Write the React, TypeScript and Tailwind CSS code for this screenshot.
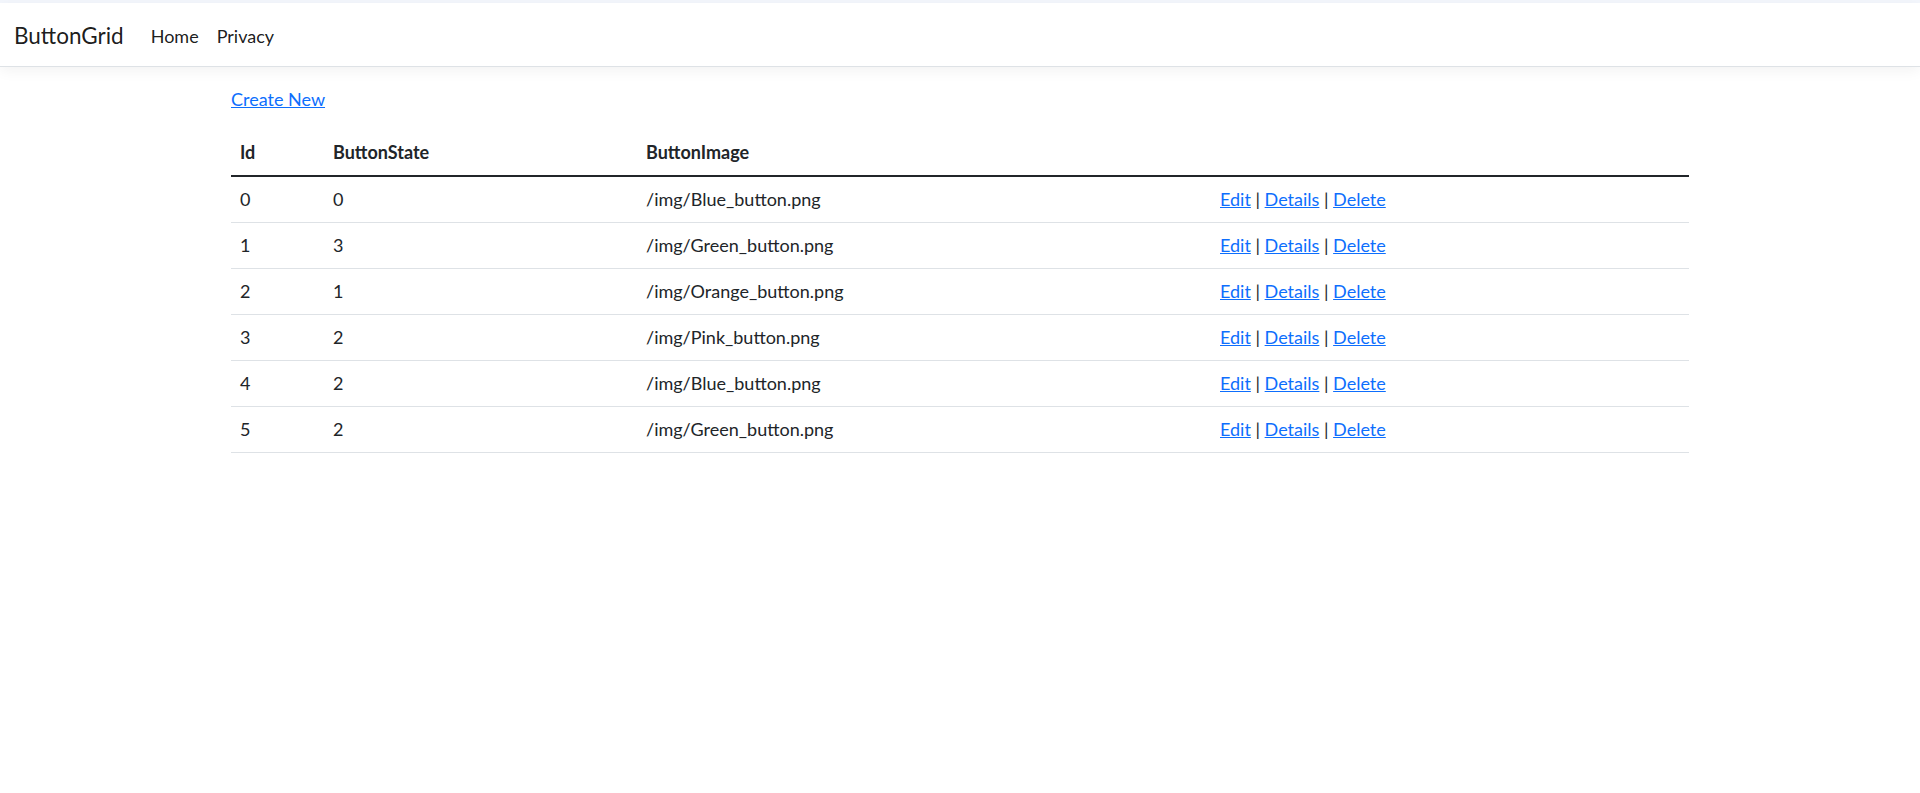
const rows = [
  { id: 0, state: 0, image: "/img/Blue_button.png" },
  { id: 1, state: 3, image: "/img/Green_button.png" },
  { id: 2, state: 1, image: "/img/Orange_button.png" },
  { id: 3, state: 2, image: "/img/Pink_button.png" },
  { id: 4, state: 2, image: "/img/Blue_button.png" },
  { id: 5, state: 2, image: "/img/Green_button.png" },
];

export default function App() {
  return (
    <div className="min-h-[793px] bg-white font-['Lato','Liberation_Sans',sans-serif] text-[18px] leading-[27px] text-[#212529]">
      <div className="h-[3px] bg-[#f3f6fc]" />
      <nav className="flex h-[64px] items-center border-b border-[#dee2e6] bg-white px-[14px] pt-[3px] shadow-[0_4px_13px_rgba(0,0,0,0.05)]">
        <a href="#" className="mr-[18px] text-[22.5px] leading-[34px] text-[#000000e6]">
          ButtonGrid
        </a>
        <a href="#" className="px-[9px] text-[#000000e6]">
          Home
        </a>
        <a href="#" className="px-[9px] text-[#000000e6]">
          Privacy
        </a>
      </nav>

      <main className="mx-auto mt-[19px] w-[1458px]">
        <p className="mb-[17px]">
          <a href="#" className="text-[#0d6efd] underline">
            Create New
          </a>
        </p>
        <table className="w-full table-fixed border-collapse text-left">
          <colgroup>
            <col className="w-[93px]" />
            <col className="w-[313px]" />
            <col className="w-[574px]" />
            <col />
          </colgroup>
          <thead>
            <tr className="h-[46px] border-b-2 border-[#212529]">
              <th className="px-[9px] font-bold">Id</th>
              <th className="px-[9px] font-bold">ButtonState</th>
              <th className="px-[9px] font-bold">ButtonImage</th>
              <th className="px-[9px]"></th>
            </tr>
          </thead>
          <tbody>
            {rows.map((r) => (
              <tr key={r.id} className="h-[46px] border-b border-[#dee2e6]">
                <td className="px-[9px]">{r.id}</td>
                <td className="px-[9px]">{r.state}</td>
                <td className="px-[9px]">{r.image}</td>
                <td className="px-[9px]">
                  <a href="#" className="text-[#0d6efd] underline">Edit</a> |{" "}
                  <a href="#" className="text-[#0d6efd] underline">Details</a> |{" "}
                  <a href="#" className="text-[#0d6efd] underline">Delete</a>
                </td>
              </tr>
            ))}
          </tbody>
        </table>
      </main>
    </div>
  );
}
